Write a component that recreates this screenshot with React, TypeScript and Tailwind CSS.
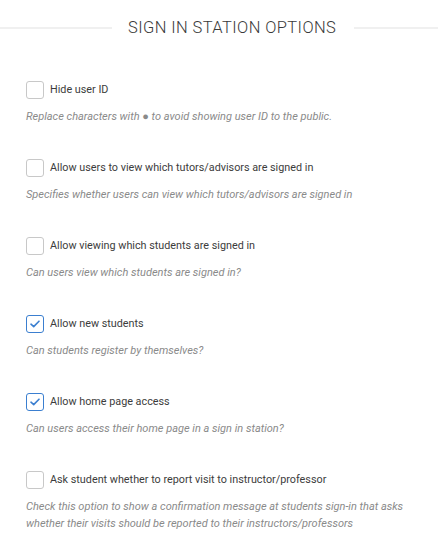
import { useState } from 'react';

const OPTIONS = [
  {
    id: 'hideUserId',
    label: 'Hide user ID',
    description: 'Replace characters with \u25CF to avoid showing user ID to the public.',
    checked: false,
  },
  {
    id: 'viewTutors',
    label: 'Allow users to view which tutors/advisors are signed in',
    description: 'Specifies whether users can view which tutors/advisors are signed in',
    checked: false,
  },
  {
    id: 'viewStudents',
    label: 'Allow viewing which students are signed in',
    description: 'Can users view which students are signed in?',
    checked: false,
  },
  {
    id: 'newStudents',
    label: 'Allow new students',
    description: 'Can students register by themselves?',
    checked: true,
  },
  {
    id: 'homePage',
    label: 'Allow home page access',
    description: 'Can users access their home page in a sign in station?',
    checked: true,
  },
  {
    id: 'reportVisit',
    label: 'Ask student whether to report visit to instructor/professor',
    description:
      'Check this option to show a confirmation message at students sign-in that asks whether their visits should be reported to their instructors/professors',
    checked: false,
  },
];

const Checkbox = ({ checked, onChange }: { checked: boolean; onChange: () => void }) => (
  <button
    type="button"
    onClick={onChange}
    className={`flex h-[18px] w-[18px] shrink-0 items-center justify-center rounded-[3px] border bg-white ${
      checked ? 'border-[#3b7fd0]' : 'border-[#c8c8c8]'
    }`}
  >
    {checked && (
      <svg width="10" height="8" viewBox="0 0 10 8" fill="none">
        <path d="M1 4.2L3.7 6.6L9 1.2" stroke="#3b7fd0" strokeWidth="1.6" strokeLinecap="round" strokeLinejoin="round" />
      </svg>
    )}
  </button>
);

export default function App() {
  const [options, setOptions] = useState(OPTIONS);

  const toggle = (id: string) => {
    setOptions(prev => prev.map(o => (o.id === id ? { ...o, checked: !o.checked } : o)));
  };

  return (
    <div className="min-h-screen bg-white font-['Roboto',sans-serif]">
      {/* Title */}
      <div className="flex items-center gap-4 pt-[18px]">
        <div className="h-[2px] w-[112px] bg-[#f0f0f0]" />
        <h1 className="text-[16.5px] leading-[20px] font-light tracking-[0.4px] text-[#3a3a3a]">SIGN IN STATION OPTIONS</h1>
        <div className="ml-[2px] h-[2px] flex-1 bg-[#f0f0f0]" />
      </div>

      {/* Options */}
      <div className="flex flex-col gap-[34px] px-[26px] pt-[43px]">
        {options.map(o => (
          <div key={o.id}>
            <div className="flex h-[18px] items-center gap-[6px]">
              <Checkbox checked={o.checked} onChange={() => toggle(o.id)} />
              <span className="text-[10.8px] text-[#3c3c3c]">{o.label}</span>
            </div>
            <p className="mt-[9px] text-[11px] leading-[17px] italic text-[#8a8a8a]">{o.description}</p>
          </div>
        ))}
      </div>
    </div>
  );
}
